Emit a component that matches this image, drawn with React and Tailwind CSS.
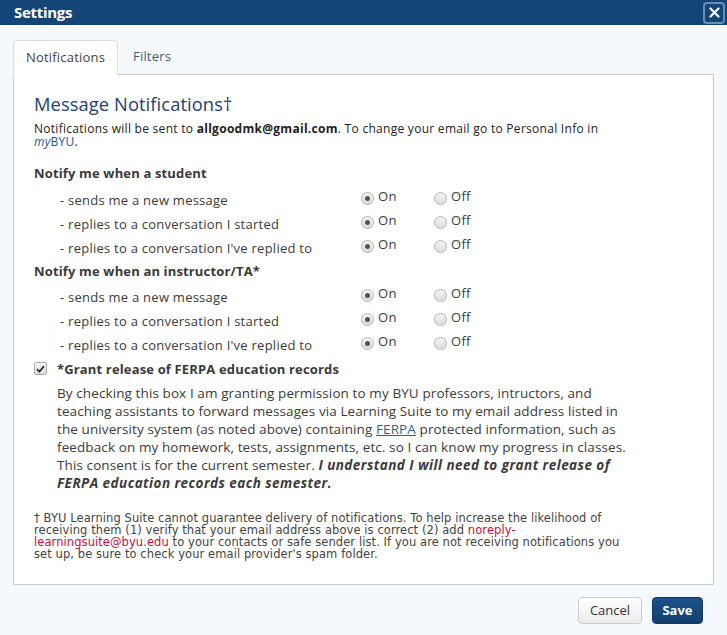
import { useState } from 'react';

const studentRows = [
  'sends me a new message',
  'replies to a conversation I started',
  "replies to a conversation I've replied to",
];

const Radio = ({ checked, onClick }) => (
  <span
    onClick={onClick}
    className="inline-flex items-center justify-center w-[13px] h-[13px] rounded-full border border-[#b5b5b5] bg-gradient-to-b from-[#f4f4f4] to-[#dcdcdc] mt-[3px] cursor-pointer"
  >
    {checked && <span className="w-[5px] h-[5px] rounded-full bg-[#555]" />}
  </span>
);

const ToggleRow = ({ label, value, onChange }) => (
  <div className="flex items-start h-[24px]">
    <div className="w-[327px] pl-[26px] pt-[2px] tracking-[0.25px]">- {label}</div>
    <div className="flex items-start w-[73px]">
      <Radio checked={value} onClick={() => onChange(true)} />
      <span className="ml-[4px] leading-[14px] tracking-[0.3px]">On</span>
    </div>
    <div className="flex items-start">
      <Radio checked={!value} onClick={() => onChange(false)} />
      <span className="ml-[4px] leading-[14px] tracking-[0.3px]">Off</span>
    </div>
  </div>
);

export default function App() {
  const [tab, setTab] = useState('notifications');
  const [student, setStudent] = useState([true, true, true]);
  const [instructor, setInstructor] = useState([true, true, true]);
  const [ferpa, setFerpa] = useState(true);

  const setAt = (arr, setter, i, v) => setter(arr.map((x, j) => (j === i ? v : x)));

  return (
    <div className="w-[727px] h-[635px] bg-[#f6f9fc] flex flex-col text-[#3b3b3b] font-['Open_Sans',sans-serif]">
      <div className="h-[25px] bg-[#134577] flex items-center justify-between pl-[14px] pr-[2px]">
        <span className="text-white font-bold text-[15px] tracking-[-0.3px]">Settings</span>
        <button className="w-[22px] h-[22px] rounded-[4px] border-2 border-[#6a8db5] flex items-center justify-center">
          <svg width="11" height="11" viewBox="0 0 11 11">
            <path d="M1.5 1.5L9.5 9.5M9.5 1.5L1.5 9.5" stroke="white" strokeWidth="2.2" strokeLinecap="round" />
          </svg>
        </button>
      </div>

      <div className="px-[13px] pt-[14px]">
        <div className="flex items-end">
          <button
            onClick={() => setTab('notifications')}
            className="h-[35px] w-[105px] bg-white border border-[#d8dde3] border-b-0 rounded-t-[4px] text-[13px] text-[#444] tracking-[0.2px] relative top-[1px]"
          >
            Notifications
          </button>
          <button onClick={() => setTab('filters')} className="h-[35px] px-[15px] text-[13px] text-[#3d5f86] tracking-[0.2px]">
            Filters
          </button>
        </div>

        <div className="h-[511px] bg-white border border-[#ccc] px-[20px] pt-[17px]">
          <h2 className="text-[18.3px] text-[#1d4272] leading-[24px] tracking-[0.1px]">Message Notifications†</h2>
          <p className="text-[12px] leading-[13px] mt-[6px] text-[#222] tracking-[0.28px] w-[580px]">
            Notifications will be sent to <b>allgoodmk@gmail.com</b>. To change your email go to Personal Info in{' '}
            <i className="text-[#2e5586]">my</i>
            <span className="text-[#2e5586]">BYU</span>.
          </p>

          <div className="text-[13px]">
            <div className="font-bold mt-[16px] h-[19px] text-[#3a3a3a] tracking-[0.15px]">Notify me when a student</div>
            <div className="mt-[6px]">
              {studentRows.map((r, i) => (
                <ToggleRow key={r} label={r} value={student[i]} onChange={(v) => setAt(student, setStudent, i, v)} />
              ))}
            </div>
            <div className="font-bold h-[25px] pt-[1px] text-[#3a3a3a] tracking-[0.15px]">Notify me when an instructor/TA*</div>
            <div>
              {studentRows.map((r, i) => (
                <ToggleRow key={r} label={r} value={instructor[i]} onChange={(v) => setAt(instructor, setInstructor, i, v)} />
              ))}
            </div>

            <div className="flex items-start">
              <span
                onClick={() => setFerpa(!ferpa)}
                className="w-[13px] h-[13px] mt-[4px] rounded-[2px] border border-[#aaa] bg-gradient-to-b from-[#f6f6f6] to-[#dedede] flex items-center justify-center cursor-pointer"
              >
                {ferpa && (
                  <svg width="9" height="8" viewBox="0 0 9 8">
                    <path d="M1 4.2L3.4 6.6L8 1.2" stroke="#333" strokeWidth="1.8" fill="none" />
                  </svg>
                )}
              </span>
              <div className="ml-[10px] mt-[1px] font-bold text-[13px] text-[#3a3a3a] tracking-[0.15px] leading-[20px]">*Grant release of FERPA education records</div>
            </div>
            <p className="ml-[23px] mt-[5px] leading-[18px] text-[13.5px] tracking-[0.1px] w-[585px]">
              By checking this box I am granting permission to my BYU professors, intructors, and teaching assistants to
              forward messages via Learning Suite to my email address listed in the university system (as noted above)
              containing <a className="underline text-[#2a6496]">FERPA</a> protected information, such as feedback on my
              homework, tests, assignments, etc. so I can know my progress in classes. This consent is for the current
              semester.{' '}
              <b className="tracking-[0.45px]"><i>I understand I will need to grant release of FERPA education records each semester.</i></b>
            </p>

            <p className="mt-[20px] text-[11.5px] leading-[12px] tracking-[0.08px] font-['DejaVu_Sans',sans-serif] text-[#444] whitespace-nowrap">
              † BYU Learning Suite cannot guarantee delivery of notifications. To help increase the likelihood of
              <br />
              receiving them (1) verify that your email address above is correct (2) add{' '}
              <span className="text-[#c3113d]">noreply-</span>
              <br />
              <span className="text-[#c3113d]">learningsuite@byu.edu</span> to your contacts or safe sender list. If you
              are not receiving notifications you
              <br />
              set up, be sure to check your email provider's spam folder.
            </p>
          </div>
        </div>
      </div>

      <div className="flex justify-end gap-[10px] pr-[24px] mt-[12px]">
        <button className="h-[27px] w-[64px] rounded-[4px] border border-[#ccc] bg-gradient-to-b from-white to-[#ebebeb] text-[13px] text-[#333]">
          Cancel
        </button>
        <button className="h-[27px] w-[51px] rounded-[4px] border border-[#0f3a66] bg-gradient-to-b from-[#1d5289] to-[#123f6d] text-[13px] font-bold text-white">
          Save
        </button>
      </div>
    </div>
  );
}
